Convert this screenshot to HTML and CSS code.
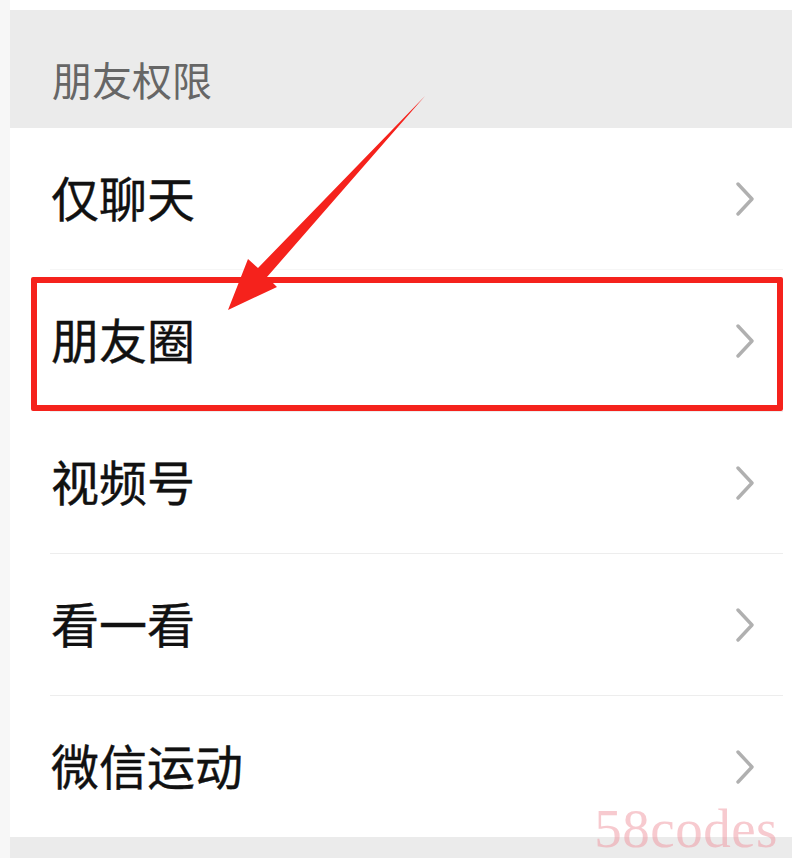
FILE: index.html
```html
<!DOCTYPE html>
<html lang="zh-CN">
<head>
    <meta charset="UTF-8">
    <meta name="viewport" content="width=device-width, initial-scale=1.0">
    <title>朋友权限</title>
    <link rel="stylesheet" href="styles.css">
</head>
<body>
    <div class="page">
        <div class="section-title">朋友权限</div>

        <div class="list">
            <div class="item">
                <span class="label">仅聊天</span>
                <svg class="chevron" viewBox="0 0 18 34"><path d="M2 2 L16 17 L2 32"/></svg>
            </div>
            <div class="item">
                <span class="label">朋友圈</span>
                <svg class="chevron" viewBox="0 0 18 34"><path d="M2 2 L16 17 L2 32"/></svg>
            </div>
            <div class="item">
                <span class="label">视频号</span>
                <svg class="chevron" viewBox="0 0 18 34"><path d="M2 2 L16 17 L2 32"/></svg>
            </div>
            <div class="item">
                <span class="label">看一看</span>
                <svg class="chevron" viewBox="0 0 18 34"><path d="M2 2 L16 17 L2 32"/></svg>
            </div>
            <div class="item">
                <span class="label">微信运动</span>
                <svg class="chevron" viewBox="0 0 18 34"><path d="M2 2 L16 17 L2 32"/></svg>
            </div>
        </div>

        <div class="footer-band"></div>
    </div>

    <!-- annotation drawn over the screenshot -->
    <div class="highlight"></div>
    <svg class="arrow" width="792" height="858" viewBox="0 0 792 858">
        <polygon points="425,96 267,277 277,287 228,310 248,259 258,268"/>
    </svg>

    <div class="watermark">58codes</div>
</body>
</html>
```

FILE: styles.css
```css
body {
    margin: 0;
    padding: 0;
    background-color: #fff;
    font-family: "Noto Sans CJK SC", "Noto Sans", sans-serif;
    position: relative;
    width: 792px;
    height: 858px;
    overflow: hidden;
}
.page {
    border-left: 10px solid #f7f7f7;
    padding-top: 10px;
    height: 848px;
    display: flex;
    flex-direction: column;
}
.section-title {
    height: 118px;
    box-sizing: border-box;
    background-color: #ebebeb;
    color: #666;
    font-size: 40px;
    line-height: 40px;
    padding: 0 0 29px 42px;
    display: flex;
    align-items: flex-end;
}
.list {
    padding-left: 40px;
    margin-right: 9px;
}
.item {
    height: 141px;
    border-bottom: 1px solid #ededed;
    display: flex;
    align-items: center;
    justify-content: space-between;
    padding-right: 29px;
}
.item:first-child {
    border-bottom-color: #f6f6f6;
}
.item:last-child {
    border-bottom: none;
}
.label {
    font-size: 48px;
    line-height: 48px;
    color: #111;
    padding: 0 0 6px 1px;
    -webkit-text-stroke: 0.4px #111;
}
.chevron {
    width: 18px;
    height: 34px;
    fill: none;
    stroke: #b0b0b0;
    stroke-width: 3.4;
    stroke-linecap: round;
    stroke-linejoin: round;
}
.footer-band {
    flex: 1;
    background-color: #ebebeb;
}
.highlight {
    position: absolute;
    left: 31px;
    top: 277px;
    width: 740px;
    height: 122px;
    border: 6px solid #f5221c;
    border-radius: 2px;
}
.arrow {
    position: absolute;
    left: 0;
    top: 0;
    fill: #f5221c;
    pointer-events: none;
}
.watermark {
    position: absolute;
    right: 14px;
    bottom: 2px;
    font-family: "Liberation Serif", serif;
    font-size: 55px;
    line-height: 55px;
    letter-spacing: 0.5px;
    color: rgba(240, 150, 160, 0.5);
}
```
